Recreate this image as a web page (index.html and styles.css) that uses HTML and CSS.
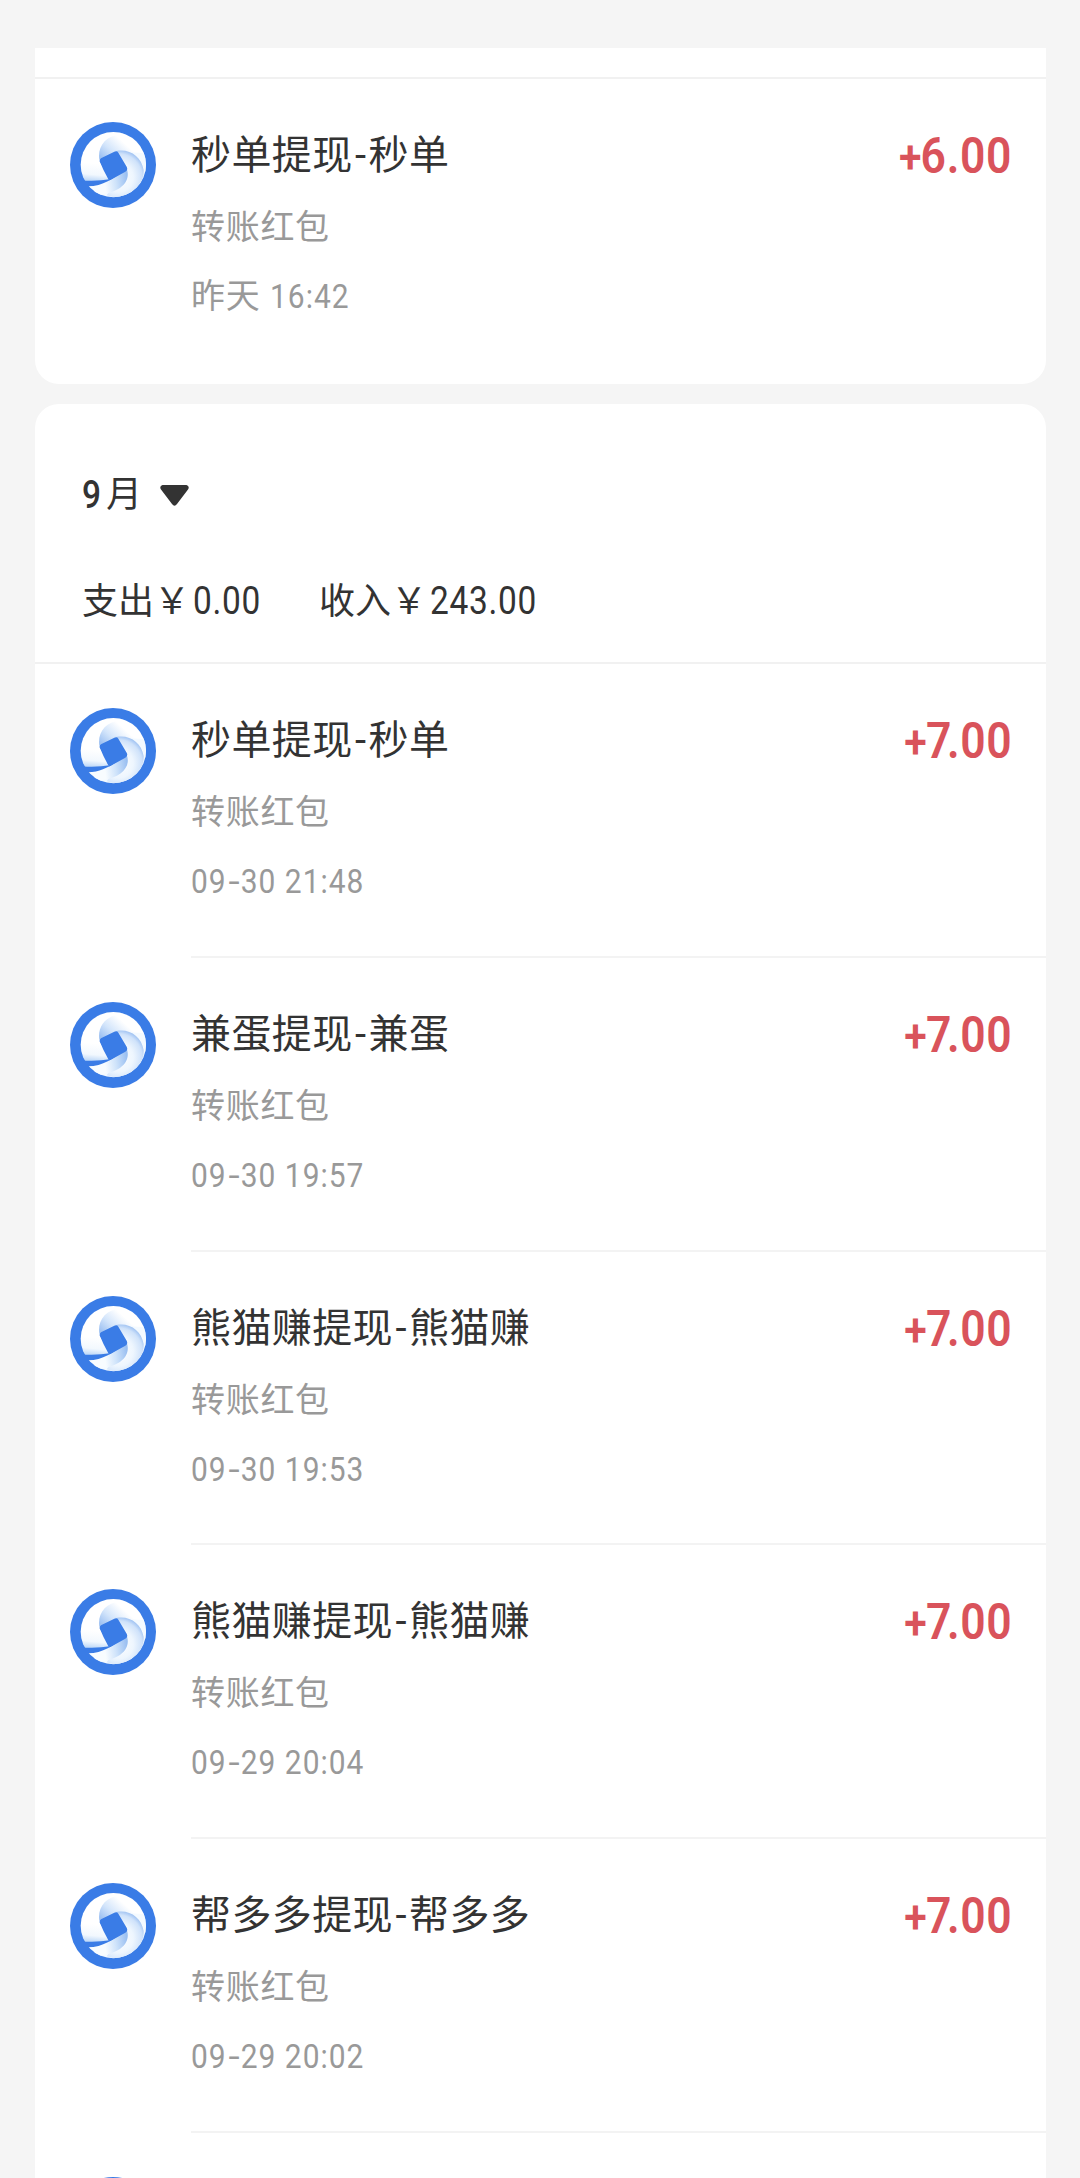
FILE: index.html
```html
<!DOCTYPE html>
<html lang="zh-CN">
<head>
<meta charset="utf-8">
<title>账单</title>
<link rel="stylesheet" href="styles.css">
</head>
<body>
<svg class="defs" width="0" height="0" aria-hidden="true">
  <defs>
    <linearGradient id="g-left" gradientUnits="userSpaceOnUse" x1="104" y1="160" x2="98" y2="222">
      <stop offset="0" stop-color="#fff"/><stop offset=".55" stop-color="#f2f8fe"/><stop offset="1" stop-color="#a5c9f4"/>
    </linearGradient>
    <linearGradient id="g-top" gradientUnits="userSpaceOnUse" x1="120" y1="138" x2="172" y2="80">
      <stop offset="0" stop-color="#9fc2f2"/><stop offset=".45" stop-color="#d3e5fb"/><stop offset="1" stop-color="#fff"/>
    </linearGradient>
    <radialGradient id="g-right" gradientUnits="userSpaceOnUse" cx="176" cy="202" r="88">
      <stop offset="0" stop-color="#fff"/><stop offset=".5" stop-color="#eef6fe"/><stop offset=".8" stop-color="#cfe2fa"/><stop offset="1" stop-color="#8cb5ef"/>
    </radialGradient>
    <linearGradient id="g-bottom" gradientUnits="userSpaceOnUse" x1="204" y1="222" x2="136" y2="232">
      <stop offset="0" stop-color="#9abff1"/><stop offset=".5" stop-color="#cde2fa"/><stop offset="1" stop-color="#f8fcff"/>
    </linearGradient>
    <clipPath id="inner"><circle cx="160" cy="164" r="98"/></clipPath>
    <symbol id="logo" viewBox="30 36 258 258">
      <circle cx="159" cy="165" r="129" fill="#3a7ce6"/>
      <g clip-path="url(#inner)">
        <path d="M200 60H50V208C85 215 120 212 149 208L119 153Z" fill="url(#g-left)"/>
        <path d="M118 149C112 110 137 78 180 73L225 60L280 130L262 190L172 124Z" fill="url(#g-top)"/>
        <path d="M262 165L270 275L110 270L100 236L190 205L200 178L168 124L262 130Z" fill="#f4faff"/>
        <path d="M154 127C200 109 244 135 251 180C253 218 222 254 170 264L140 256L198 176L168 122Z" fill="url(#g-right)"/>
        <path d="M84 229C130 228 158 206 200 176C214 210 186 244 128 252L100 262Z" fill="url(#g-bottom)"/>
        <path d="M123 145L163 125Q171 121 175 128L200 170Q205 179 196 185L151 210Q147 212 145 208Q130 182 119 154Q118 148 123 145Z" fill="#3a7ce6"/>
      </g>
    </symbol>
  </defs>
</svg>

<main class="page">
  <section class="card card-first">
    <div class="cut"></div>
    <article class="row">
      <svg class="logo"><use href="#logo"/></svg>
      <div class="body">
        <div class="info">
          <h3 class="title">秒单提现<span class="dash">-</span>秒单</h3>
          <p class="kind">转账红包</p>
          <p class="time">昨天 <span class="num">16:42</span></p>
        </div>
        <div class="amount"><span class="sign">+</span>6.00</div>
      </div>
    </article>
  </section>

  <section class="card">
    <header class="head">
      <div class="month"><b>9</b><span>月</span>
        <svg class="caret" viewBox="0 0 29 21"><path d="M2.5 0H26.5Q30 1.200 28 4.500L17 19Q14.500 22.500 12 19L1 4.500Q-1 1.200 2.500 0Z"/></svg>
      </div>
      <div class="sums"><span class="out">支出￥<span class="num">0.00</span></span><span>收入￥<span class="num">243.00</span></span></div>
    </header>
    <article class="row">
      <svg class="logo"><use href="#logo"/></svg>
      <div class="body">
        <div class="info">
          <h3 class="title">秒单提现<span class="dash">-</span>秒单</h3>
          <p class="kind">转账红包</p>
          <p class="time"><span class="num">09<span class="bar">-</span>30 21:48</span></p>
        </div>
        <div class="amount"><span class="sign">+</span><span class="seven">7</span>.00</div>
      </div>
    </article>
    <article class="row">
      <svg class="logo"><use href="#logo"/></svg>
      <div class="body">
        <div class="info">
          <h3 class="title">兼蛋提现<span class="dash">-</span>兼蛋</h3>
          <p class="kind">转账红包</p>
          <p class="time"><span class="num">09<span class="bar">-</span>30 19:57</span></p>
        </div>
        <div class="amount"><span class="sign">+</span><span class="seven">7</span>.00</div>
      </div>
    </article>
    <article class="row">
      <svg class="logo"><use href="#logo"/></svg>
      <div class="body">
        <div class="info">
          <h3 class="title">熊猫赚提现<span class="dash">-</span>熊猫赚</h3>
          <p class="kind">转账红包</p>
          <p class="time"><span class="num">09<span class="bar">-</span>30 19:53</span></p>
        </div>
        <div class="amount"><span class="sign">+</span><span class="seven">7</span>.00</div>
      </div>
    </article>
    <article class="row">
      <svg class="logo"><use href="#logo"/></svg>
      <div class="body">
        <div class="info">
          <h3 class="title">熊猫赚提现<span class="dash">-</span>熊猫赚</h3>
          <p class="kind">转账红包</p>
          <p class="time"><span class="num">09<span class="bar">-</span>29 20:04</span></p>
        </div>
        <div class="amount"><span class="sign">+</span><span class="seven">7</span>.00</div>
      </div>
    </article>
    <article class="row">
      <svg class="logo"><use href="#logo"/></svg>
      <div class="body">
        <div class="info">
          <h3 class="title">帮多多提现<span class="dash">-</span>帮多多</h3>
          <p class="kind">转账红包</p>
          <p class="time"><span class="num">09<span class="bar">-</span>29 20:02</span></p>
        </div>
        <div class="amount"><span class="sign">+</span><span class="seven">7</span>.00</div>
      </div>
    </article>
    <article class="row">
      <svg class="logo"><use href="#logo"/></svg>
    </article>
  </section>
</main>
</body>
</html>
```
FILE: styles.css
```css
* { box-sizing: border-box; margin: 0; padding: 0; }
body {
  background: #f5f5f5;
  color: #333;
  font-family: Roboto, "Noto Sans CJK SC", sans-serif;
}
.defs { position: absolute; }
.page {
  height: 2178px;
  overflow: hidden;
  padding: 48px 34px 0 35px;
  display: flex;
  flex-direction: column;
  gap: 20px;
}
.card { background: #fff; border-radius: 24px; flex: none; }
.card-first { height: 336px; border-radius: 0 0 24px 24px; }
.cut { height: 31px; border-bottom: 2px solid #f1f1f1; }
.head {
  height: 260.300px;
  padding: 69px 0 0 47px;
  border-bottom: 2px solid #f1f1f1;
}
.month { display: flex; align-items: center; height: 44px; font-size: 36px; line-height: 44px; }
.month b { font-size: 38px; font-weight: 500; width: 24px; transform: scaleX(.88); transform-origin: left; }
.month span { width: 36px; }
.caret { width: 29px; height: 21px; margin-left: 18px; fill: #333; }
.sums { display: flex; margin-top: 61px; font-size: 36px; line-height: 46px; }
.out { width: 237px; }
/* Digits are set narrow, like DIN figures */
.num { display: inline-block; transform: scaleX(.88); transform-origin: left; white-space: nowrap; }
.sums .num { font-size: 38px; letter-spacing: .8px; margin-left: 3px; }
.row { display: flex; height: 293.700px; padding-left: 35px; }
.logo { flex: none; width: 86px; height: 86px; margin: 44px 35px 0 0; }
.body {
  flex: 1;
  display: flex;
  justify-content: space-between;
  padding: 51px 34px 0 0;
  border-bottom: 2px solid #f3f3f3;
}
.card-first .logo { margin-top: 43px; }
.card-first .body { border-bottom: 0; padding-top: 50.500px; }
.title { font-size: 40px; font-weight: 400; line-height: 52px; letter-spacing: .4px; }
.dash { display: inline-block; width: 16px; text-align: center; letter-spacing: 0; }
.kind, .time { color: #999; font-size: 34px; letter-spacing: .7px; line-height: 46px; }
.kind { margin-top: 22px; }
.time { margin-top: 23px; }
.time .num { letter-spacing: 1.150px; }
.bar { display: inline-block; width: 16px; text-align: center; transform: scaleX(1.350); letter-spacing: 0; }
.amount {
  color: #d9535b;
  font-size: 50px;
  font-weight: 600;
  line-height: 52px;
  letter-spacing: .7px;
  white-space: nowrap;
  transform: scaleX(.89);
  transform-origin: right;
}
.sign { font-size: 46px; letter-spacing: -1px; }
.seven { letter-spacing: -5px; }
```
